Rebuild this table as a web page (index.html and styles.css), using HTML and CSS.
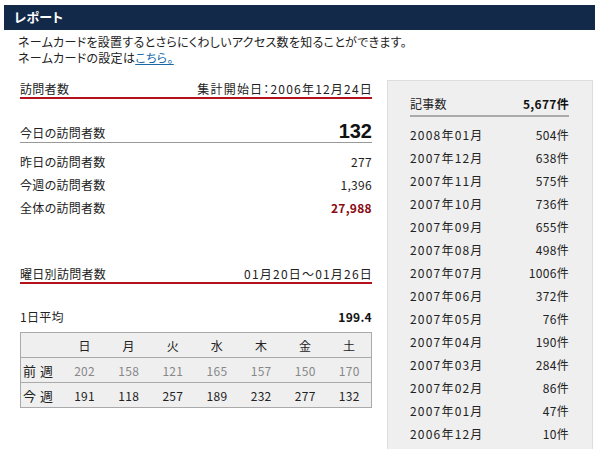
FILE: index.html
```html
<!DOCTYPE html>
<html lang="ja">
<head>
<meta charset="utf-8">
<title>レポート</title>
<link rel="stylesheet" href="styles.css">
</head>
<body>
<div class="titlebar">レポート</div>
<p class="intro">ネームカードを設置するとさらにくわしいアクセス数を知ることができます。<br>ネームカードの設定は<a href="#" class="link">こちら。</a></p>
<div class="main">
  <div class="left">
    <div class="sechead"><span>訪問者数</span><span class="date">集計開始日：2006年12月24日</span></div>
    <div class="today"><span>今日の訪問者数</span><span class="big">132</span></div>
    <div class="rows">
      <div class="row"><span>昨日の訪問者数</span><span>277</span></div>
      <div class="row"><span>今週の訪問者数</span><span>1,396</span></div>
      <div class="row"><span>全体の訪問者数</span><span class="total">27,988</span></div>
    </div>
    <div class="sechead sec2"><span>曜日別訪問者数</span><span class="date">01月20日～01月26日</span></div>
    <div class="row avg"><span>1日平均</span><span class="bold">199.4</span></div>
    <table class="week">
      <tr class="hdr"><th></th><th>日</th><th>月</th><th>火</th><th>水</th><th>木</th><th>金</th><th>土</th></tr>
      <tr class="prev"><th>前週</th><td>202</td><td>158</td><td>121</td><td>165</td><td>157</td><td>150</td><td>170</td></tr>
      <tr class="cur"><th>今週</th><td>191</td><td>118</td><td>257</td><td>189</td><td>232</td><td>277</td><td>132</td></tr>
    </table>
  </div>
  <div class="panel">
    <div class="phead"><span>記事数</span><span class="bold">5,677件</span></div>
    <div class="months">
      <div class="mrow"><span class="ym">2008年01月</span><span>504件</span></div>
      <div class="mrow"><span class="ym">2007年12月</span><span>638件</span></div>
      <div class="mrow"><span class="ym">2007年11月</span><span>575件</span></div>
      <div class="mrow"><span class="ym">2007年10月</span><span>736件</span></div>
      <div class="mrow"><span class="ym">2007年09月</span><span>655件</span></div>
      <div class="mrow"><span class="ym">2007年08月</span><span>498件</span></div>
      <div class="mrow"><span class="ym">2007年07月</span><span>1006件</span></div>
      <div class="mrow"><span class="ym">2007年06月</span><span>372件</span></div>
      <div class="mrow"><span class="ym">2007年05月</span><span>76件</span></div>
      <div class="mrow"><span class="ym">2007年04月</span><span>190件</span></div>
      <div class="mrow"><span class="ym">2007年03月</span><span>284件</span></div>
      <div class="mrow"><span class="ym">2007年02月</span><span>86件</span></div>
      <div class="mrow"><span class="ym">2007年01月</span><span>47件</span></div>
      <div class="mrow"><span class="ym">2006年12月</span><span>10件</span></div>
    </div>
  </div>
</div>
</body>
</html>
```
FILE: styles.css
```css
* { box-sizing: border-box; }
html, body { margin: 0; padding: 0; background: #fff; }
body {
  font-family: "Noto Sans CJK JP", sans-serif;
  font-size: 12px;
  color: #222;
  font-feature-settings: "palt";
  letter-spacing: 0.3px;
}
.titlebar {
  margin: 5px 0 0 4px;
  height: 25px;
  line-height: 24px;
  background: #12294a;
  color: #fff;
  font-weight: bold;
  font-size: 13px;
  padding-left: 10px;
}
.intro {
  margin: 4px 0 0 18px;
  line-height: 16px;
}
.link { color: #1a6aa6; text-decoration: underline; }
.main {
  display: flex;
  gap: 15px;
  margin-top: 14px;
  padding-left: 20px;
}
.left { width: 352px; }
.sechead {
  display: flex;
  justify-content: space-between;
  height: 19px;
  line-height: 17px;
  border-bottom: 2px solid #b3121b;
}
.date { letter-spacing: 1.2px; margin-right: -1px; }
.today {
  display: flex;
  justify-content: space-between;
  align-items: flex-end;
  margin-top: 21px;
  height: 23px;
  border-bottom: 1px solid #999;
}
.today span:first-child { line-height: 18px; }
.big {
  font-family: "Liberation Sans", Arial, sans-serif;
  font-weight: bold;
  font-size: 20px;
  line-height: 22px;
  color: #111;
  letter-spacing: 0;
}
.rows { margin-top: 7px; }
.row {
  display: flex;
  justify-content: space-between;
  height: 23px;
  line-height: 23px;
}
.total { color: #8a0a12; font-weight: bold; }
.bold { font-weight: bold; color: #111; }
.sec2 { margin-top: 46px; }
.avg { margin-top: 21px; }
.week {
  margin-top: 4px;
  width: 352px;
  border-collapse: collapse;
  background: #efefef;
  border: 1px solid #aaa;
  table-layout: fixed;
}
.week th, .week td {
  height: 25px;
  text-align: center;
  font-weight: normal;
  padding: 0;
  border-bottom: 1px solid #aaa;
}
.week tr > :first-child {
  width: 42px;
  text-align: left;
  padding-left: 2px;
  font-size: 13px;
  letter-spacing: 4px;
}
.prev td { color: #888; }
.panel {
  width: 206px;
  min-height: 380px;
  background: #efefef;
  border: 1px solid #ddd;
  border-bottom: none;
  padding: 14px 0 0 22px;
}
.phead {
  display: flex;
  justify-content: space-between;
  width: 159px;
  height: 22px;
  line-height: 18px;
  border-bottom: 2px solid #aaa;
}
.months { margin-top: 6px; width: 159px; }
.mrow {
  display: flex;
  justify-content: space-between;
  height: 23px;
  line-height: 23px;
}
.ym { letter-spacing: 1.2px; }
```
